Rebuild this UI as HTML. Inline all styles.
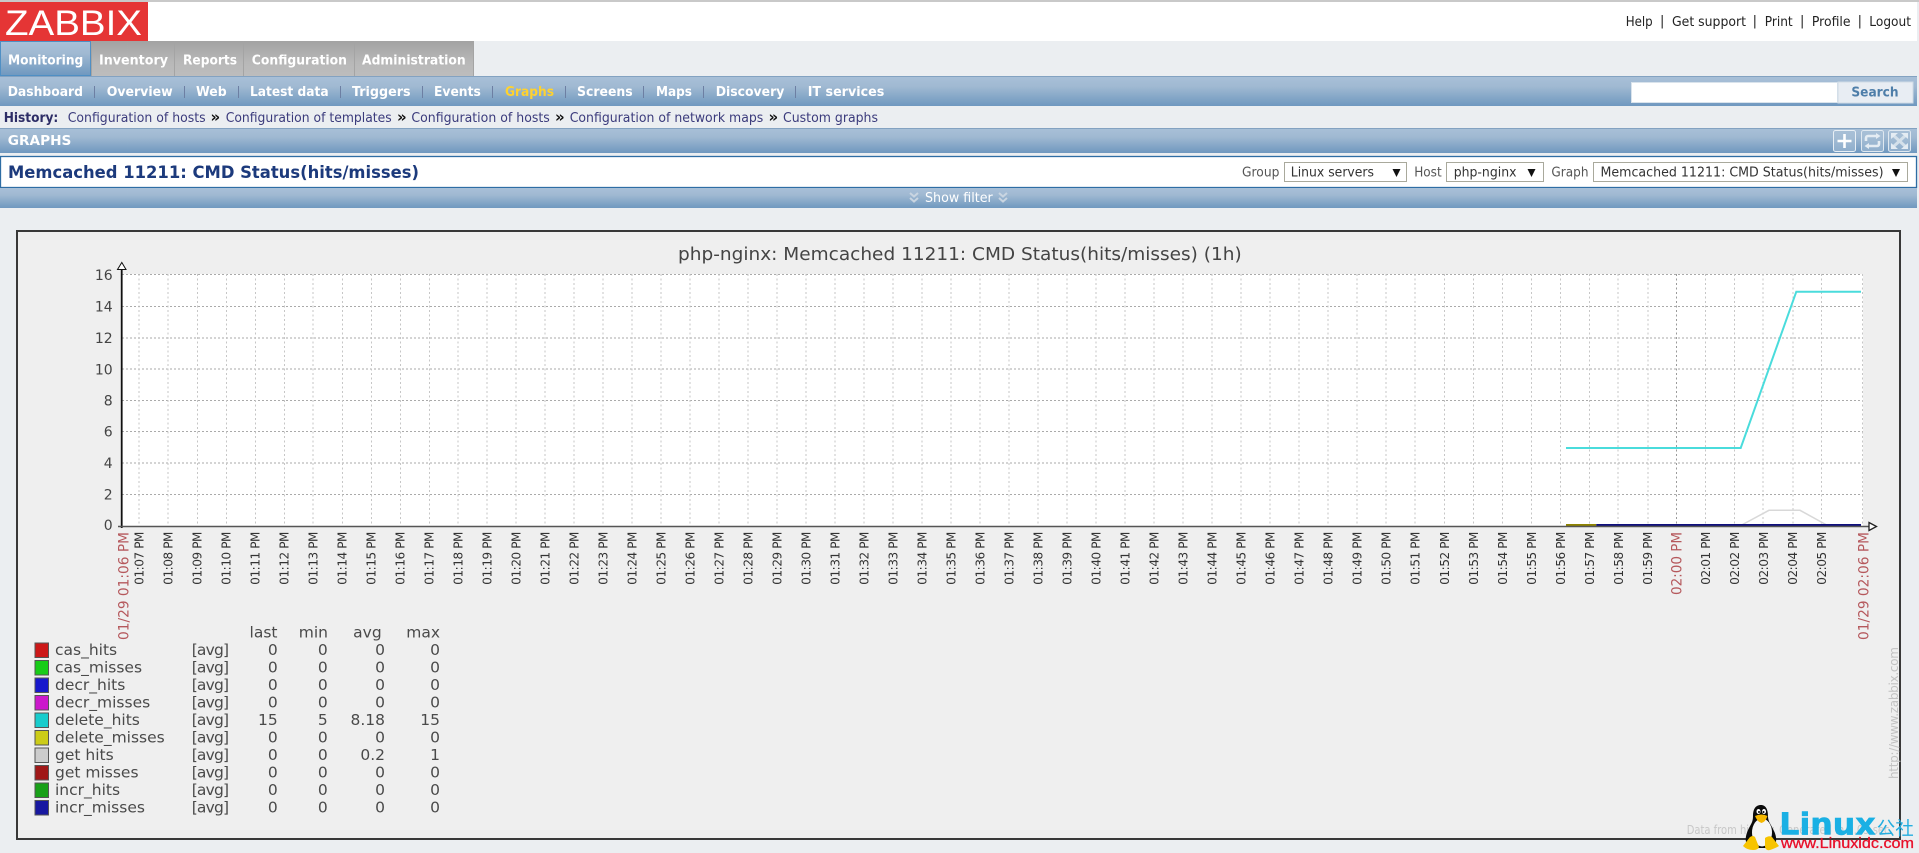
<!DOCTYPE html>
<html lang="en">
<head>
<meta charset="utf-8">
<title>Custom graphs</title>
<style>
html,body{margin:0;padding:0;background:#ebeef1;width:1919px;height:853px;overflow:hidden}
svg{display:block;filter:blur(.35px)}
text{font-family:"DejaVu Sans","Liberation Sans",sans-serif}
.b{font-weight:bold}
.nav{fill:#fff;font-weight:bold;font-size:13.5px}
.hist{fill:#3b3b7c;font-size:13px}
.sep{stroke:#6d7fa3;stroke-width:1}
.top{fill:#222;font-size:13px}
.sel{fill:#333;font-size:13px}
.lab{fill:#555;font-size:13px}
.selbox{fill:#fff;stroke:#a9a99c;stroke-width:1}
.t{fill:#333;font-size:12px;text-anchor:end;letter-spacing:-.4px}
.r{fill:#b5585c;font-size:14px;text-anchor:end}
.y{fill:#444;font-size:14px;text-anchor:end}
.l{fill:#4a4a4a;font-size:15.5px}
.a{fill:#4a4a4a;font-size:15.5px;letter-spacing:-.8px}
.v{fill:#4a4a4a;font-size:15.5px;text-anchor:end}
.sw{stroke:#555;stroke-width:1}
</style>
</head>
<body>
<svg width="1919" height="853" viewBox="0 0 1919 853" xmlns="http://www.w3.org/2000/svg">
<defs>
<linearGradient id="bl" x1="0" y1="0" x2="0" y2="1"><stop offset="0" stop-color="#a8c0d8"/><stop offset=".35" stop-color="#a0b9d2"/><stop offset="1" stop-color="#6f98bf"/></linearGradient>
<linearGradient id="gr" x1="0" y1="0" x2="0" y2="1"><stop offset="0" stop-color="#a3a3a3"/><stop offset=".6" stop-color="#b8b8b8"/><stop offset="1" stop-color="#bdbdbd"/></linearGradient>
</defs>
<rect width="1919" height="853" fill="#ebeef1"/>
<!-- header -->
<rect x="0" y="0" width="1917" height="41" fill="#fff"/>
<rect x="0" y="0" width="1919" height="2" fill="#c9c9c9"/>
<rect x="0" y="2" width="148" height="39" fill="#e53535"/>
<text x="5" y="35" font-size="35" fill="#fff" textLength="137" lengthAdjust="spacingAndGlyphs" style="font-family:'Liberation Sans',sans-serif">ZABBIX</text>
<text class="top" x="1625.7" y="26" textLength="27" lengthAdjust="spacingAndGlyphs">Help</text>
<text class="top" x="1660" y="25">|</text>
<text class="top" x="1672" y="26" textLength="74" lengthAdjust="spacingAndGlyphs">Get support</text>
<text class="top" x="1752.6" y="25">|</text>
<text class="top" x="1764.7" y="26" textLength="28" lengthAdjust="spacingAndGlyphs">Print</text>
<text class="top" x="1800" y="25">|</text>
<text class="top" x="1811.9" y="26" textLength="38.6" lengthAdjust="spacingAndGlyphs">Profile</text>
<text class="top" x="1857.6" y="25">|</text>
<text class="top" x="1869.3" y="26" textLength="41.7" lengthAdjust="spacingAndGlyphs">Logout</text>
<!-- main tabs -->
<rect x="91" y="41" width="383" height="35" fill="#a4a4a4"/>
<rect x=".5" y="41.5" width="90" height="34" fill="url(#bl)" stroke="#4f8fc4"/>
<rect x="92" y="41" width="82" height="35" fill="url(#gr)"/>
<rect x="175" y="41" width="68" height="35" fill="url(#gr)"/>
<rect x="244" y="41" width="110" height="35" fill="url(#gr)"/>
<rect x="355" y="41" width="118" height="35" fill="url(#gr)"/>
<text class="nav" x="8" y="64.5" textLength="75.3" lengthAdjust="spacingAndGlyphs">Monitoring</text>
<text class="nav" x="99" y="64.5" textLength="69" lengthAdjust="spacingAndGlyphs">Inventory</text>
<text class="nav" x="183" y="64.5" textLength="54" lengthAdjust="spacingAndGlyphs">Reports</text>
<text class="nav" x="251.8" y="64.5" textLength="95.2" lengthAdjust="spacingAndGlyphs">Configuration</text>
<text class="nav" x="362" y="64.5" textLength="103.7" lengthAdjust="spacingAndGlyphs">Administration</text>
<!-- sub nav -->
<rect x="0" y="76" width="1917" height="30" fill="url(#bl)"/>
<rect x="0" y="76" width="1917" height="1" fill="#83a2c1"/>
<text class="nav" x="7.7" y="96" textLength="75.3" lengthAdjust="spacingAndGlyphs">Dashboard</text>
<text class="nav" x="106.7" y="96" textLength="66" lengthAdjust="spacingAndGlyphs">Overview</text>
<text class="nav" x="196" y="96" textLength="30.7" lengthAdjust="spacingAndGlyphs">Web</text>
<text class="nav" x="250" y="96" textLength="78.6" lengthAdjust="spacingAndGlyphs">Latest data</text>
<text class="nav" x="352" y="96" textLength="58.6" lengthAdjust="spacingAndGlyphs">Triggers</text>
<text class="nav" x="434" y="96" textLength="46.8" lengthAdjust="spacingAndGlyphs">Events</text>
<text class="nav" x="505" y="96" textLength="49" lengthAdjust="spacingAndGlyphs" style="fill:#ffd22e">Graphs</text>
<text class="nav" x="577" y="96" textLength="55.7" lengthAdjust="spacingAndGlyphs">Screens</text>
<text class="nav" x="656" y="96" textLength="36" lengthAdjust="spacingAndGlyphs">Maps</text>
<text class="nav" x="715.7" y="96" textLength="68.6" lengthAdjust="spacingAndGlyphs">Discovery</text>
<text class="nav" x="807.7" y="96" textLength="76.6" lengthAdjust="spacingAndGlyphs">IT services</text>
<path class="sep" d="M94.5 86v12M184.5 86v12M238.5 86v12M340.5 86v12M422.5 86v12M492.5 86v12M565.5 86v12M643.5 86v12M703.5 86v12M795.5 86v12"/>
<rect x="1631.5" y="82.5" width="206" height="20" fill="#fff" stroke="#d9e3ec"/>
<rect x="1838" y="82" width="75" height="21" fill="#e8edf3" stroke="#cfdbe6"/>
<text x="1851.4" y="96.7" class="b" font-size="13.5" fill="#4e7ea9" textLength="47.2" lengthAdjust="spacingAndGlyphs">Search</text>
<!-- history -->
<text class="b" x="3.7" y="122" font-size="13" fill="#2d2d66" textLength="54.6" lengthAdjust="spacingAndGlyphs">History:</text>
<text class="hist" x="67.7" y="122" textLength="138" lengthAdjust="spacingAndGlyphs">Configuration of hosts</text>
<text class="b" x="210.5" y="122" font-size="15" fill="#111">»</text>
<text class="hist" x="225.7" y="122" textLength="166" lengthAdjust="spacingAndGlyphs">Configuration of templates</text>
<text class="b" x="397" y="122" font-size="15" fill="#111">»</text>
<text class="hist" x="411.4" y="122" textLength="138.4" lengthAdjust="spacingAndGlyphs">Configuration of hosts</text>
<text class="b" x="555" y="122" font-size="15" fill="#111">»</text>
<text class="hist" x="569.7" y="122" textLength="193.6" lengthAdjust="spacingAndGlyphs">Configuration of network maps</text>
<text class="b" x="768.5" y="122" font-size="15" fill="#111">»</text>
<text class="hist" x="783" y="122" textLength="95" lengthAdjust="spacingAndGlyphs">Custom graphs</text>
<!-- graphs bar -->
<rect x="0" y="128" width="1917" height="25" fill="url(#bl)"/>
<rect x="0" y="128" width="1917" height="1" fill="#83a2c1"/>
<text class="nav" x="7.8" y="145" textLength="63.6" lengthAdjust="spacingAndGlyphs">GRAPHS</text>
<!-- header icons -->
<rect x="1833.5" y="130.5" width="22" height="21" rx="2" fill="#a9c1d8" fill-opacity=".5" stroke="#e8eff5"/>
<path d="M1844.5 134v14M1837.5 141h14" stroke="#fff" stroke-width="2.6" fill="none"/>
<rect x="1861.5" y="130.5" width="22" height="21" rx="2" fill="#a9c1d8" fill-opacity=".5" stroke="#dfe8f0"/>
<path d="M1866 141v-3a2 2 0 0 1 2-2h10M1879 141v3a2 2 0 0 1-2 2h-10" stroke="#e4ecf3" stroke-width="2.6" fill="none"/>
<path d="M1876 133l4.500 3-4.500 3zM1869 143l-4.500 3 4.500 3z" fill="#e4ecf3"/>
<rect x="1888.5" y="130.5" width="22" height="21" rx="2" fill="#a9c1d8" fill-opacity=".5" stroke="#dfe8f0"/>
<path d="M1893 135l13 12M1906 135l-13 12" stroke="#d4e0ea" stroke-width="3" fill="none"/>
<path d="M1891 133h7l-7 6zM1908 133h-7l7 6zM1891 149h7l-7-6zM1908 149h-7l7-6z" fill="#e4ecf3"/>
<!-- title panel -->
<rect x=".5" y="156.5" width="1916" height="31" fill="#fff" stroke="#2e6da4" stroke-width="1.3"/>
<text class="b" x="8" y="178" font-size="17" fill="#1c3a7c" textLength="411" lengthAdjust="spacingAndGlyphs">Memcached 11211: CMD Status(hits/misses)</text>
<text class="lab" x="1242" y="176.7" textLength="37.4" lengthAdjust="spacingAndGlyphs">Group</text>
<rect class="selbox" x="1284.5" y="162.5" width="122" height="19"/>
<text class="sel" x="1290.8" y="176.7" textLength="83.2" lengthAdjust="spacingAndGlyphs">Linux servers</text>
<path d="M1392.5 169h8l-4 8z" fill="#111"/>
<text class="lab" x="1414.2" y="176.7" textLength="27.5" lengthAdjust="spacingAndGlyphs">Host</text>
<rect class="selbox" x="1446.5" y="162.5" width="97" height="19"/>
<text class="sel" x="1453.7" y="176.7" textLength="62.8" lengthAdjust="spacingAndGlyphs">php-nginx</text>
<path d="M1527.5 169h8l-4 8z" fill="#111"/>
<text class="lab" x="1551.4" y="176.7" textLength="37.1" lengthAdjust="spacingAndGlyphs">Graph</text>
<rect class="selbox" x="1593.5" y="162.5" width="314" height="19"/>
<text class="sel" x="1600.5" y="176.7" textLength="283" lengthAdjust="spacingAndGlyphs">Memcached 11211: CMD Status(hits/misses)</text>
<path d="M1892 169h8l-4 8z" fill="#111"/>
<!-- show filter -->
<rect x="0" y="188" width="1917" height="20" fill="url(#bl)"/>
<text x="925" y="202" font-size="13.5" fill="#fff" textLength="67.7" lengthAdjust="spacingAndGlyphs">Show filter</text>
<path d="M910 193l4 3.500 4-3.500M910 198l4 3.500 4-3.500M999 193l4 3.500 4-3.500M999 198l4 3.500 4-3.500" stroke="#c9d5e1" stroke-width="2" fill="none"/>
<!-- graph box -->
<rect x="17" y="231" width="1883" height="608" fill="#efefef" stroke="#383838" stroke-width="2"/>
<text x="678" y="260" font-size="17.5" fill="#444" textLength="563.7" lengthAdjust="spacingAndGlyphs">php-nginx: Memcached 11211: CMD Status(hits/misses) (1h)</text>
<rect x="122" y="274" width="1741" height="252" fill="#fff"/>
<!-- grid -->
<path d="M122 274.5H1863M122 306.5H1863M122 338H1863M122 369H1863M122 400.5H1863M122 431.5H1863M122 463H1863M122 494.5H1863" stroke="#aaa" stroke-width="1" stroke-dasharray="2 2" fill="none"/>
<path d="M139 274V526M168 274V526M197.5 274V526M226.5 274V526M255.5 274V526M284.5 274V526M313 274V526M342.5 274V526M371.5 274V526M400.5 274V526M429.5 274V526M458 274V526M487 274V526M516 274V526M545 274V526M574 274V526M603 274V526M632 274V526M661 274V526M690 274V526M719 274V526M748 274V526M777 274V526M806 274V526M835 274V526M864 274V526M893 274V526M922 274V526M951 274V526M980 274V526M1009 274V526M1038 274V526M1067 274V526M1096 274V526M1125 274V526M1154 274V526M1183 274V526M1212 274V526M1241 274V526M1270 274V526M1299 274V526M1328 274V526M1357 274V526M1386 274V526M1415 274V526M1444.5 274V526M1473.5 274V526M1502.5 274V526M1531.5 274V526M1560.5 274V526M1589.5 274V526M1618 274V526M1648 274V526M1705.5 274V526M1734.5 274V526M1763 274V526M1793 274V526M1821.5 274V526M1862.5 274V526" stroke="#c6c6c6" stroke-width="1" stroke-dasharray="2 2.5" fill="none"/>
<path d="M1676.5 274V526" stroke="#9a9a9a" stroke-width="1" stroke-dasharray="2 2.5" fill="none"/>
<!-- series -->
<path d="M1741.7 525L1769 510.3H1800L1826.7 525" stroke="#d8d8d8" stroke-width="1.5" fill="none"/>
<path d="M1566 448H1740.7L1796.3 291.7H1861" stroke="#4adcdc" stroke-width="2" fill="none"/>
<path d="M1566 525H1596.3" stroke="#8f8400" stroke-width="2" fill="none"/>
<path d="M1596.3 525H1861" stroke="#10107c" stroke-width="2" fill="none"/>
<!-- axes -->
<path d="M121.7 269.5V528" stroke="#111" stroke-width="1.8" fill="none"/>
<path d="M118 526.5H1870" stroke="#555" stroke-width="1.4" fill="none"/>
<path d="M117.5 269.5h8.5l-4.200-7z" fill="#fff" stroke="#111" stroke-width="1"/>
<path d="M1869 522.5l7.500 4-7.500 4z" fill="#fff" stroke="#222" stroke-width="1.300"/>
<!-- y labels -->
<text class="y" x="112.7" y="280">16</text>
<text class="y" x="112.7" y="311.7">14</text>
<text class="y" x="112.7" y="343">12</text>
<text class="y" x="112.7" y="374.3">10</text>
<text class="y" x="112.7" y="405.3">8</text>
<text class="y" x="112.7" y="436.7">6</text>
<text class="y" x="112.7" y="468">4</text>
<text class="y" x="112.7" y="499.3">2</text>
<text class="y" x="112.7" y="530">0</text>
<!-- x labels -->
<text class="r" transform="translate(128.5 532)rotate(-90)" textLength="108" lengthAdjust="spacingAndGlyphs">01/29 01:06 PM</text>
<text class="t" transform="translate(143.5 532)rotate(-90)">01:07 PM</text>
<text class="t" transform="translate(172.5 532)rotate(-90)">01:08 PM</text>
<text class="t" transform="translate(201.5 532)rotate(-90)">01:09 PM</text>
<text class="t" transform="translate(230.5 532)rotate(-90)">01:10 PM</text>
<text class="t" transform="translate(259.5 532)rotate(-90)">01:11 PM</text>
<text class="t" transform="translate(288.5 532)rotate(-90)">01:12 PM</text>
<text class="t" transform="translate(317.5 532)rotate(-90)">01:13 PM</text>
<text class="t" transform="translate(346.5 532)rotate(-90)">01:14 PM</text>
<text class="t" transform="translate(375.5 532)rotate(-90)">01:15 PM</text>
<text class="t" transform="translate(404.5 532)rotate(-90)">01:16 PM</text>
<text class="t" transform="translate(433.5 532)rotate(-90)">01:17 PM</text>
<text class="t" transform="translate(462.5 532)rotate(-90)">01:18 PM</text>
<text class="t" transform="translate(491.5 532)rotate(-90)">01:19 PM</text>
<text class="t" transform="translate(520.5 532)rotate(-90)">01:20 PM</text>
<text class="t" transform="translate(549.5 532)rotate(-90)">01:21 PM</text>
<text class="t" transform="translate(578.5 532)rotate(-90)">01:22 PM</text>
<text class="t" transform="translate(607.5 532)rotate(-90)">01:23 PM</text>
<text class="t" transform="translate(636.5 532)rotate(-90)">01:24 PM</text>
<text class="t" transform="translate(665.5 532)rotate(-90)">01:25 PM</text>
<text class="t" transform="translate(694.5 532)rotate(-90)">01:26 PM</text>
<text class="t" transform="translate(723.5 532)rotate(-90)">01:27 PM</text>
<text class="t" transform="translate(752.5 532)rotate(-90)">01:28 PM</text>
<text class="t" transform="translate(781.5 532)rotate(-90)">01:29 PM</text>
<text class="t" transform="translate(810.5 532)rotate(-90)">01:30 PM</text>
<text class="t" transform="translate(839.5 532)rotate(-90)">01:31 PM</text>
<text class="t" transform="translate(868.5 532)rotate(-90)">01:32 PM</text>
<text class="t" transform="translate(897.5 532)rotate(-90)">01:33 PM</text>
<text class="t" transform="translate(926.5 532)rotate(-90)">01:34 PM</text>
<text class="t" transform="translate(955.5 532)rotate(-90)">01:35 PM</text>
<text class="t" transform="translate(984.5 532)rotate(-90)">01:36 PM</text>
<text class="t" transform="translate(1013.5 532)rotate(-90)">01:37 PM</text>
<text class="t" transform="translate(1042.5 532)rotate(-90)">01:38 PM</text>
<text class="t" transform="translate(1071.5 532)rotate(-90)">01:39 PM</text>
<text class="t" transform="translate(1100.5 532)rotate(-90)">01:40 PM</text>
<text class="t" transform="translate(1129.5 532)rotate(-90)">01:41 PM</text>
<text class="t" transform="translate(1158.5 532)rotate(-90)">01:42 PM</text>
<text class="t" transform="translate(1187.5 532)rotate(-90)">01:43 PM</text>
<text class="t" transform="translate(1216.5 532)rotate(-90)">01:44 PM</text>
<text class="t" transform="translate(1245.5 532)rotate(-90)">01:45 PM</text>
<text class="t" transform="translate(1274.5 532)rotate(-90)">01:46 PM</text>
<text class="t" transform="translate(1303.5 532)rotate(-90)">01:47 PM</text>
<text class="t" transform="translate(1332.5 532)rotate(-90)">01:48 PM</text>
<text class="t" transform="translate(1361.5 532)rotate(-90)">01:49 PM</text>
<text class="t" transform="translate(1390.5 532)rotate(-90)">01:50 PM</text>
<text class="t" transform="translate(1419.5 532)rotate(-90)">01:51 PM</text>
<text class="t" transform="translate(1449 532)rotate(-90)">01:52 PM</text>
<text class="t" transform="translate(1478 532)rotate(-90)">01:53 PM</text>
<text class="t" transform="translate(1507 532)rotate(-90)">01:54 PM</text>
<text class="t" transform="translate(1536 532)rotate(-90)">01:55 PM</text>
<text class="t" transform="translate(1565 532)rotate(-90)">01:56 PM</text>
<text class="t" transform="translate(1594 532)rotate(-90)">01:57 PM</text>
<text class="t" transform="translate(1623 532)rotate(-90)">01:58 PM</text>
<text class="t" transform="translate(1652 532)rotate(-90)">01:59 PM</text>
<text class="r" transform="translate(1681.5 532)rotate(-90)" textLength="63" lengthAdjust="spacingAndGlyphs">02:00 PM</text>
<text class="t" transform="translate(1710 532)rotate(-90)">02:01 PM</text>
<text class="t" transform="translate(1739 532)rotate(-90)">02:02 PM</text>
<text class="t" transform="translate(1768 532)rotate(-90)">02:03 PM</text>
<text class="t" transform="translate(1797 532)rotate(-90)">02:04 PM</text>
<text class="t" transform="translate(1826 532)rotate(-90)">02:05 PM</text>
<text class="r" transform="translate(1868.5 532)rotate(-90)" textLength="108" lengthAdjust="spacingAndGlyphs">01/29 02:06 PM</text>
<!-- legend -->
<text class="v" x="277.5" y="637.7">last</text>
<text class="v" x="328" y="637.7">min</text>
<text class="v" x="381.7" y="637.7">avg</text>
<text class="v" x="440" y="637.7">max</text>
<rect class="sw" x="35" y="643" width="13.5" height="14.5" fill="#cc1818"/>
<rect class="sw" x="35" y="660.5" width="13.5" height="14.5" fill="#18cc18"/>
<rect class="sw" x="35" y="678" width="13.5" height="14.5" fill="#1818cc"/>
<rect class="sw" x="35" y="695.5" width="13.5" height="14.5" fill="#cc18cc"/>
<rect class="sw" x="35" y="713" width="13.5" height="14.5" fill="#18cccc"/>
<rect class="sw" x="35" y="730.5" width="13.5" height="14.5" fill="#cccc18"/>
<rect class="sw" x="35" y="748" width="13.5" height="14.5" fill="#cccccc"/>
<rect class="sw" x="35" y="765.5" width="13.5" height="14.5" fill="#a01818"/>
<rect class="sw" x="35" y="783" width="13.5" height="14.5" fill="#18a018"/>
<rect class="sw" x="35" y="800.5" width="13.5" height="14.5" fill="#1818a0"/>
<g>
<text class="l" x="55" y="655">cas_hits</text><text class="a" x="191.7" y="655">[avg]</text><text class="v" x="277.7" y="655">0</text><text class="v" x="327.7" y="655">0</text><text class="v" x="385" y="655">0</text><text class="v" x="440" y="655">0</text>
<text class="l" x="55" y="672.5">cas_misses</text><text class="a" x="191.7" y="672.5">[avg]</text><text class="v" x="277.7" y="672.5">0</text><text class="v" x="327.7" y="672.5">0</text><text class="v" x="385" y="672.5">0</text><text class="v" x="440" y="672.5">0</text>
<text class="l" x="55" y="690">decr_hits</text><text class="a" x="191.7" y="690">[avg]</text><text class="v" x="277.7" y="690">0</text><text class="v" x="327.7" y="690">0</text><text class="v" x="385" y="690">0</text><text class="v" x="440" y="690">0</text>
<text class="l" x="55" y="707.5">decr_misses</text><text class="a" x="191.7" y="707.5">[avg]</text><text class="v" x="277.7" y="707.5">0</text><text class="v" x="327.7" y="707.5">0</text><text class="v" x="385" y="707.5">0</text><text class="v" x="440" y="707.5">0</text>
<text class="l" x="55" y="725">delete_hits</text><text class="a" x="191.7" y="725">[avg]</text><text class="v" x="277.7" y="725">15</text><text class="v" x="327.7" y="725">5</text><text class="v" x="385" y="725">8.18</text><text class="v" x="440" y="725">15</text>
<text class="l" x="55" y="742.5">delete_misses</text><text class="a" x="191.7" y="742.5">[avg]</text><text class="v" x="277.7" y="742.5">0</text><text class="v" x="327.7" y="742.5">0</text><text class="v" x="385" y="742.5">0</text><text class="v" x="440" y="742.5">0</text>
<text class="l" x="55" y="760">get hits</text><text class="a" x="191.7" y="760">[avg]</text><text class="v" x="277.7" y="760">0</text><text class="v" x="327.7" y="760">0</text><text class="v" x="385" y="760">0.2</text><text class="v" x="440" y="760">1</text>
<text class="l" x="55" y="777.5">get misses</text><text class="a" x="191.7" y="777.5">[avg]</text><text class="v" x="277.7" y="777.5">0</text><text class="v" x="327.7" y="777.5">0</text><text class="v" x="385" y="777.5">0</text><text class="v" x="440" y="777.5">0</text>
<text class="l" x="55" y="795">incr_hits</text><text class="a" x="191.7" y="795">[avg]</text><text class="v" x="277.7" y="795">0</text><text class="v" x="327.7" y="795">0</text><text class="v" x="385" y="795">0</text><text class="v" x="440" y="795">0</text>
<text class="l" x="55" y="812.5">incr_misses</text><text class="a" x="191.7" y="812.5">[avg]</text><text class="v" x="277.7" y="812.5">0</text><text class="v" x="327.7" y="812.5">0</text><text class="v" x="385" y="812.5">0</text><text class="v" x="440" y="812.5">0</text>
</g>
<!-- footer text -->
<text transform="translate(1898 779)rotate(-90)" font-size="12" fill="#c2c2c2" textLength="132" lengthAdjust="spacing">http://www.zabbix.com</text>
<text x="1686.7" y="834" font-size="12" fill="#c8c8c8" textLength="206" lengthAdjust="spacingAndGlyphs">Data from history. Generated in 0.05 sec.</text>
<!-- watermark -->
<path d="M1761 805c-6 0-8 5-8 11c0 6-2 8-4 12c-2 4-4 9-3 14l4 6h22l4-6c1-6-2-11-4-15c-2-4-4-6-4-11c0-6-2-11-7-11z" fill="#0b0b0b"/>
<ellipse cx="1762" cy="832.5" rx="10" ry="14" fill="#f6f6f6"/>
<ellipse cx="1758.5" cy="811.5" rx="2" ry="2.500" fill="#fff"/>
<ellipse cx="1764" cy="811.5" rx="2" ry="2.500" fill="#fff"/>
<circle cx="1759" cy="812" r="1" fill="#000"/>
<circle cx="1763.5" cy="812" r="1" fill="#000"/>
<path d="M1755 816q6.500-3 12.500 0q-2 6-6 7q-4-1-6.500-7z" fill="#f5b800"/>
<path d="M1743 846l7-9q3-2 5 0l4 10q-1 3-6 3q-6 0-10-4z" fill="#f7c400"/>
<path d="M1765 838q4-3 7-1l7 9q-3 2-9 4q-4 1-5-3z" fill="#f7c400"/>
<text class="b" x="1779.3" y="834.5" font-size="30" fill="#1ab0e4" stroke="#1ab0e4" stroke-width=".6" textLength="96.4" lengthAdjust="spacingAndGlyphs">Linux</text>
<text x="1876.7" y="835" font-size="18.5" fill="#25aee0" style="font-family:'Liberation Sans','Noto Sans CJK SC',sans-serif">公社</text>
<text x="1781" y="848" font-size="15" fill="#e8102a" stroke="#e8102a" stroke-width=".3" textLength="133" lengthAdjust="spacingAndGlyphs" style="font-family:'Liberation Sans',sans-serif">www.Linuxidc.com</text>
</svg>
</body>
</html>
